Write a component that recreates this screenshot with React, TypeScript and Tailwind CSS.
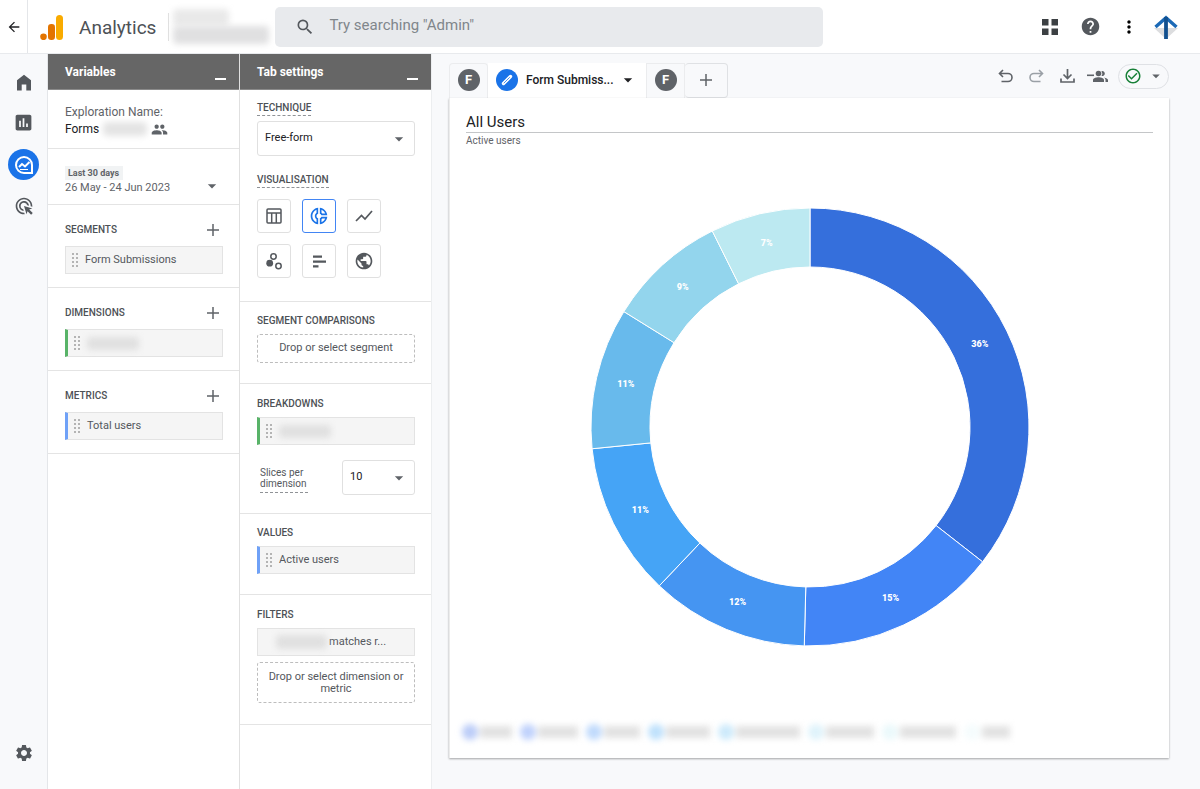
import type { ReactNode } from 'react'
import clsx from 'clsx'
import {
  MdAdsClick,
  MdArrowBack,
  MdArrowDropDown,
  MdCheckCircleOutline,
  MdGroup,
  MdHelp,
  MdInsertChart,
  MdMoreVert,
  MdOutlineDonutSmall,
  MdPublic,
  MdSearch,
  MdSettings,
} from 'react-icons/md'

const slices = [
  { label: '36%', end: 128, color: '#356fdc' },
  { label: '15%', end: 181.5, color: '#4285f6' },
  { label: '12%', end: 223.5, color: '#4595f2' },
  { label: '11%', end: 264.3, color: '#45a4f6' },
  { label: '11%', end: 301.8, color: '#68baec' },
  { label: '9%', end: 333.5, color: '#93d5ed' },
  { label: '7%', end: 360, color: '#bce9f1' },
]

// Hidden legend entries: dot colour and name width
const legend = [
  { dot: 'bg-[#bccdf8]', bar: 'w-8' },
  { dot: 'bg-[#c0d2fc]', bar: 'w-10' },
  { dot: 'bg-[#c0dafc]', bar: 'w-9' },
  { dot: 'bg-[#bfe1fc]', bar: 'w-11' },
  { dot: 'bg-[#cdeafb]', bar: 'w-16' },
  { dot: 'bg-[#dff3fb]', bar: 'w-12' },
  { dot: 'bg-[#ebf9fb]', bar: 'w-14' },
  { dot: 'bg-[#f5fcfd]', bar: 'w-7' },
]

function point(angle: number, radius: number) {
  const rad = (angle * Math.PI) / 180
  return [219 + radius * Math.sin(rad), 219 - radius * Math.cos(rad)]
}

function slicePath(start: number, end: number) {
  const [x1, y1] = point(start, 219)
  const [x2, y2] = point(end, 219)
  const [x3, y3] = point(end, 160)
  const [x4, y4] = point(start, 160)
  return `M${x1} ${y1}A219 219 0 0 1 ${x2} ${y2}L${x3} ${y3}A160 160 0 0 0 ${x4} ${y4}Z`
}

function DonutChart() {
  return (
    <svg viewBox="0 0 438 438" className="w-full max-w-[438px]" role="img" aria-label="Active users">
      {slices.map((slice, i) => {
        const start = i === 0 ? 0 : slices[i - 1].end
        const [x, y] = point((start + slice.end) / 2, 189)
        return (
          <g key={i}>
            <path d={slicePath(start, slice.end)} fill={slice.color} stroke="#fff" strokeWidth="1" />
            <text x={x} y={y + 3} textAnchor="middle" fill="#fff" className="text-[9px] font-black">
              {slice.label}
            </text>
          </g>
        )
      })}
    </svg>
  )
}

function Redacted({ className }: { className: string }) {
  return <span aria-hidden className={clsx('block rounded-sm blur-[3px]', className)} />
}

function PanelHeader({ title }: { title: string }) {
  return (
    <header className="flex h-9 items-center justify-between border-b border-[#8a8a8a] bg-[#666] pr-[13px] pl-[17px] text-white">
      <h2 className="text-xs font-bold">{title}</h2>
      <button type="button" aria-label={`Minimise ${title}`} className="flex h-4 w-[11px] items-end">
        <span className="h-0.5 w-full bg-white" />
      </button>
    </header>
  )
}

function PlusIcon() {
  return (
    <svg viewBox="0 0 14 14" className="size-[14px]" fill="none" stroke="#5f6368" strokeWidth="1.5">
      <path d="M7 1v12M1 7h12" />
    </svg>
  )
}

function DragHandle() {
  return (
    <svg viewBox="0 0 7 15" className="h-[15px] w-[7px] shrink-0" fill="#b4b4b4">
      {[0, 4, 8, 12].map((y) => (
        <g key={y}>
          <rect x="0" y={y} width="2" height="2" />
          <rect x="4" y={y} width="2" height="2" />
        </g>
      ))}
    </svg>
  )
}

function Chip({ accent, children }: { accent?: 'green' | 'blue'; children: ReactNode }) {
  return (
    <div
      className={clsx(
        'flex h-7 items-center gap-[6px] border border-[#e3e3e3] bg-[#f5f5f5] pl-[6px] text-[11px] text-[#54585d]',
        accent && 'border-l-[3px]',
        accent === 'green' && 'border-l-[#58b368]',
        accent === 'blue' && 'border-l-[#6fa1f7]',
      )}
    >
      <DragHandle />
      {children}
    </div>
  )
}

function VariableSection({ title, children }: { title: string; children: ReactNode }) {
  return (
    <section className="h-[83px] border-b border-[#e4e4e4] pt-4 pr-4 pl-[17px]">
      <div className="mb-2 flex h-[17px] items-center justify-between pr-[3px]">
        <h3 className="text-[10px] leading-[17px] font-medium text-[#4d5156]">{title}</h3>
        <button type="button" aria-label={`Add ${title.toLowerCase()}`} className="h-4">
          <PlusIcon />
        </button>
      </div>
      {children}
    </section>
  )
}

function SettingSection({ className, children }: { className: string; children: ReactNode }) {
  return (
    <section className={clsx('border-b border-[#e4e4e4] pr-4 pl-[17px]', className)}>{children}</section>
  )
}

function SettingTitle({ children }: { children: ReactNode }) {
  return <h3 className="mb-[6px] text-[10px] leading-[14px] font-medium text-[#4d5156]">{children}</h3>
}

function SelectBox({ id, value, className }: { id: string; value: string; className?: string }) {
  return (
    <div className={clsx('relative', className)}>
      <select
        id={id}
        className="block h-[35px] w-full appearance-none rounded-[3px] border border-[#e0e0e0] bg-white px-[7px] text-[11px] text-[#202124]"
      >
        <option>{value}</option>
      </select>
      <MdArrowDropDown className="pointer-events-none absolute top-2 right-[6px] size-5 text-[#5f6368]" />
    </div>
  )
}

function VisButton({ label, active, children }: { label: string; active?: boolean; children: ReactNode }) {
  return (
    <button
      type="button"
      aria-label={label}
      aria-pressed={!!active}
      className={clsx(
        'flex size-[34px] items-center justify-center rounded-[3px] border bg-white',
        active ? 'border-[#4285f4] text-[#1a73e8]' : 'border-[#e0e0e0] text-[#54585d]',
      )}
    >
      {children}
    </button>
  )
}

function TopBar() {
  return (
    <header className="flex h-[54px] shrink-0 items-center border-b border-[#e8eaed] bg-white">
      <button
        type="button"
        aria-label="Back"
        className="flex h-full w-7 items-center justify-center border-r border-[#e4e6e9] text-[#202124]"
      >
        <MdArrowBack className="size-4" />
      </button>
      <svg viewBox="0 0 24 26" className="ml-3 h-[26px] w-6">
        <rect x="16" y="1" width="7" height="25" rx="3.5" fill="#f9ab00" />
        <rect x="8" y="10" width="7" height="16" rx="3.2" fill="#e37400" />
        <circle cx="3.5" cy="22.8" r="3.3" fill="#e37400" />
      </svg>
      <h1 className="ml-[15px] pt-[3px] text-[19px] text-[#4d5156]">Analytics</h1>
      <div className="ml-3 h-7 w-px shrink-0 bg-[#e0e0e0]" />
      <div className="ml-1 w-[98px] shrink-0">
        <Redacted className="h-[17px] w-14 bg-[#e9e9e9]" />
        <Redacted className="h-[18px] w-24 bg-[#e0e0e1]" />
      </div>
      <label className="ml-1 flex h-10 max-w-[548px] flex-1 items-center gap-[14px] rounded-[5px] bg-[#e8eaed] px-5">
        <MdSearch className="size-5 shrink-0 text-[#54585d]" />
        <input
          type="text"
          aria-label="Search"
          placeholder={'Try searching "Admin"'}
          className="min-w-0 flex-1 bg-transparent pb-0.5 text-[15px] placeholder:text-[#80868b]"
        />
      </label>
      <div className="ml-auto flex items-center gap-[18px] pr-[14px] text-[#54585d]">
        <button type="button" aria-label="Apps" className="mr-1">
          <svg viewBox="0 0 16 16" className="size-4" fill="#3c4043">
            <path d="M0 0h6.500v6.500h-6.500zM9.500 0h6.500v6.500h-6.500zM0 9.500h6.500v6.500h-6.500zM9.500 9.500h6.500v6.500h-6.500z" />
          </svg>
        </button>
        <button type="button" aria-label="Help">
          <MdHelp className="size-[21px]" />
        </button>
        <button type="button" aria-label="More" className="text-black">
          <MdMoreVert className="size-5" />
        </button>
      </div>
      <button type="button" aria-label="Account" className="mr-[21px]">
        <svg viewBox="0 0 26 26" className="size-[26px]" fill="none">
          <path d="M1 14h24L13 25z" fill="#dcdddf" />
          <path d="M2.500 13 13 3.800 23.500 13" stroke="#1b69b6" strokeWidth="3.400" />
          <path d="M13 3v22" stroke="#12508f" strokeWidth="3.800" />
        </svg>
      </button>
    </header>
  )
}

function SideNav() {
  return (
    <nav className="flex w-12 shrink-0 flex-col items-center border-r border-[#e4e6e9] pt-5 pb-[26px] text-[#54585d]">
      <a href="#home" aria-label="Home">
        <svg viewBox="0 0 16 17" className="h-[17px] w-4" fill="currentColor">
          <path d="M8 .8 15 6.300V16.500H10.300V10.500H5.700V16.500H1V6.300z" />
        </svg>
      </a>
      <a href="#reports" aria-label="Reports" className="mt-[21px]">
        <MdInsertChart className="size-[21px]" />
      </a>
      <a
        href="#explore"
        aria-label="Explore"
        className="mt-4 flex size-[31px] items-center justify-center rounded-full bg-[#1a73e8]"
      >
        <svg viewBox="0 0 20 20" className="size-5" fill="none" stroke="#fff" strokeWidth="2">
          <path d="M10 18a8 8 0 1 1 8-8v8z" />
          <path d="m5 12 3-3 3 2.500 4.500-4.500" />
          <path d="M6 14.500h8" strokeWidth="1" />
        </svg>
      </a>
      <a href="#advertising" aria-label="Advertising" className="mt-4">
        <MdAdsClick className="size-5" />
      </a>
      <a href="#admin" aria-label="Admin" className="mt-auto">
        <MdSettings className="size-5" />
      </a>
    </nav>
  )
}

function VariablesPanel() {
  return (
    <aside className="w-48 shrink-0 border-r border-[#e0e0e0] bg-white">
      <PanelHeader title="Variables" />
      <section className="h-[59px] border-b border-[#e4e4e4] pt-[13px] pl-[17px] text-xs text-[#5f6368]">
        <p className="leading-[18px]">Exploration Name:</p>
        <div className="flex h-4 items-center text-[#202124]">
          Forms
          <Redacted className="ml-1 h-[14px] w-11 bg-[#e4e4e4]" />
          <MdGroup className="ml-1 size-[17px] text-[#5f6368]" />
        </div>
      </section>
      <section className="flex h-14 items-end justify-between border-b border-[#e4e4e4] pr-[17px] pb-2 pl-[17px] text-[#5f6368]">
        <div>
          <span className="block w-[58px] bg-[#f1f3f4] pl-[3px] text-[9px] leading-[14px] font-bold">
            Last 30 days
          </span>
          <p className="text-[11px] leading-4">26 May - 24 Jun 2023</p>
        </div>
        <button type="button" aria-label="Change date range">
          <MdArrowDropDown className="size-5" />
        </button>
      </section>
      <VariableSection title="SEGMENTS">
        <Chip>Form Submissions</Chip>
      </VariableSection>
      <VariableSection title="DIMENSIONS">
        <Chip accent="green">
          <Redacted className="h-[13px] w-[52px] bg-[#e0e0e0]" />
        </Chip>
      </VariableSection>
      <VariableSection title="METRICS">
        <Chip accent="blue">Total users</Chip>
      </VariableSection>
    </aside>
  )
}

function SettingsPanel() {
  return (
    <aside className="w-[191px] shrink-0 bg-white">
      <PanelHeader title="Tab settings" />
      <SettingSection className="h-[212px] pt-[11px]">
        <label
          htmlFor="technique"
          className="mb-[5px] block w-fit border-b border-dashed border-[#8f9296] text-[10px] leading-[14px] font-medium text-[#4d5156]"
        >
          TECHNIQUE
        </label>
        <SelectBox id="technique" value="Free-form" />
        <h3 className="mt-[17px] mb-[11px] w-fit border-b border-dashed border-[#8f9296] text-[10px] leading-[14px] font-medium text-[#4d5156]">
          VISUALISATION
        </h3>
        <div className="grid w-fit grid-cols-3 gap-[11px]">
          <VisButton label="Table">
            <svg viewBox="0 0 16 16" className="size-4" fill="none" stroke="currentColor" strokeWidth="1.5">
              <rect x="1" y="1" width="14" height="14" rx="1" />
              <path d="M1 5h14M5.700 5v10M10.300 5v10" />
            </svg>
          </VisButton>
          <VisButton label="Donut chart" active>
            <MdOutlineDonutSmall className="size-5" />
          </VisButton>
          <VisButton label="Line chart">
            <svg viewBox="0 0 18 12" className="h-3 w-[18px]" fill="none" stroke="currentColor" strokeWidth="1.700">
              <path d="m1 11 5.500-5.500 3.500 3.500 7-8" />
            </svg>
          </VisButton>
          <VisButton label="Scatter plot">
            <svg viewBox="0 0 16 17" className="h-[17px] w-4" fill="none" stroke="currentColor" strokeWidth="1.500">
              <circle cx="7.500" cy="3.500" r="2.700" />
              <circle cx="12.500" cy="13" r="2.700" />
              <circle cx="3.700" cy="10.200" r="3.400" fill="currentColor" stroke="none" />
            </svg>
          </VisButton>
          <VisButton label="Bar chart">
            <svg viewBox="0 0 13 13" className="size-[13px]" fill="currentColor">
              <path d="M0 .5h9v2.300h-9zM0 5.400h13v2.300h-13zM0 10.200h5.500v2.300h-5.500z" />
            </svg>
          </VisButton>
          <VisButton label="Geo map">
            <MdPublic className="size-5" />
          </VisButton>
        </div>
      </SettingSection>
      <SettingSection className="h-[82px] pt-3">
        <SettingTitle>SEGMENT COMPARISONS</SettingTitle>
        <button
          type="button"
          className="h-[29px] w-full rounded-[3px] border border-dashed border-[#bdbdbd] text-[11px] text-[#54585d]"
        >
          Drop or select segment
        </button>
      </SettingSection>
      <SettingSection className="h-[130px] pt-[13px]">
        <SettingTitle>BREAKDOWNS</SettingTitle>
        <Chip accent="green">
          <Redacted className="h-[13px] w-[52px] bg-[#e0e0e0]" />
        </Chip>
        <div className="mt-[15px] flex items-center justify-between pl-[3px]">
          <label
            htmlFor="slices"
            className="mt-1 w-12 border-b border-dashed border-[#8f9296] pb-[3px] text-[10px] leading-[11px] text-[#54585d]"
          >
            Slices per dimension
          </label>
          <SelectBox id="slices" value="10" className="w-[73px]" />
        </div>
      </SettingSection>
      <SettingSection className="h-[81px] pt-3">
        <SettingTitle>VALUES</SettingTitle>
        <Chip accent="blue">Active users</Chip>
      </SettingSection>
      <SettingSection className="h-[130px] pt-[13px]">
        <SettingTitle>FILTERS</SettingTitle>
        <div className="mb-[6px] flex h-7 items-center border border-[#e3e3e3] bg-[#f5f5f5] pl-[18px] text-[11px] text-[#54585d]">
          <Redacted className="mr-0.5 h-[14px] w-[51px] bg-[#e0e0e0]" />
          matches r...
        </div>
        <button
          type="button"
          className="h-[41px] w-full rounded-[3px] border border-dashed border-[#bdbdbd] text-[11px] leading-3 text-[#54585d]"
        >
          Drop or select dimension or metric
        </button>
      </SettingSection>
    </aside>
  )
}

function LetterBadge() {
  return (
    <span className="flex size-[22px] items-center justify-center rounded-full bg-[#5f6368] text-[13px] font-bold text-white">
      F
    </span>
  )
}

function TabBar() {
  return (
    <div className="flex h-[35px] items-stretch">
      <button
        type="button"
        className="flex w-[39px] items-center justify-center rounded-t-sm border border-b-0 border-[#ebecee] pb-0.5"
      >
        <LetterBadge />
      </button>
      <button
        type="button"
        className="flex w-[158px] items-center bg-white pb-0.5 pl-2 text-xs font-medium text-[#202124]"
      >
        <span className="mr-2 flex size-[22px] items-center justify-center rounded-full bg-[#1a73e8]">
          <svg viewBox="0 0 14 14" className="size-[14px]" fill="none" stroke="#fff" strokeLinecap="round">
            <path d="m3.500 10.500 7-7" strokeWidth="3.400" />
            <path d="m4 10 5.500-5.500" stroke="#1a73e8" strokeWidth=".8" />
          </svg>
        </span>
        Form Submiss...
        <MdArrowDropDown className="ml-1 size-5" />
      </button>
      <button
        type="button"
        className="flex w-[39px] items-center justify-center border border-b-0 border-[#ebecee] pb-0.5"
      >
        <LetterBadge />
      </button>
      <button
        type="button"
        aria-label="Add tab"
        className="flex w-[43px] items-center justify-center rounded-sm border border-l-0 border-[#dfe1e4] pb-0.5"
      >
        <PlusIcon />
      </button>
      <div className="ml-auto flex items-center gap-4 pb-[9px] text-[#5f6368]">
        <button type="button" aria-label="Undo">
          <svg viewBox="0 0 15 14" className="h-[14px] w-[15px]" fill="none" stroke="currentColor" strokeWidth="1.600">
            <path d="M5 1 1.500 4.500 5 8M2 4.500h8a4 4 0 0 1 0 8H3.500" />
          </svg>
        </button>
        <button type="button" aria-label="Redo" className="text-[#9aa0a6]">
          <svg viewBox="0 0 15 14" className="h-[14px] w-[15px]" fill="none" stroke="currentColor" strokeWidth="1.600">
            <path d="m10 1 3.500 3.500L10 8M13 4.500H5a4 4 0 0 0 0 8h6.500" />
          </svg>
        </button>
        <button type="button" aria-label="Export data">
          <svg viewBox="0 0 15 14" className="h-[14px] w-[15px]" fill="none" stroke="currentColor" strokeWidth="1.700">
            <path d="M7.500 0v9M3.500 5.500l4 4 4-4M1 9.500V13h13V9.500" />
          </svg>
        </button>
        <button type="button" aria-label="Share exploration" className="-ml-1">
          <svg viewBox="0 0 21 13" className="h-[13px] w-[21px]" fill="currentColor">
            <path d="M0 4.500h7v1.600H0z" />
            <circle cx="11.500" cy="3.500" r="2.800" />
            <path d="M6 12v-2c0-2 3.500-2.800 5.500-2.800S17 8 17 10v2zM14.500 1q1.500 2.500 0 5a2.600 2.600 0 1 0 0-5zM17 7.400c2 .5 4 1.200 4 2.700V12h-2.500v-2c0-1.100-.6-1.900-1.500-2.600z" />
          </svg>
        </button>
        <button
          type="button"
          aria-label="Data quality"
          className="-ml-[6px] flex h-[25px] w-[51px] items-center gap-[5px] rounded-full border border-[#dfe1e5] pl-[5px]"
        >
          <MdCheckCircleOutline className="size-[18px] text-[#188038]" />
          <MdArrowDropDown className="size-[18px]" />
        </button>
      </div>
    </div>
  )
}

function Report() {
  return (
    <main className="flex min-w-0 flex-1 flex-col border-l border-[#eceef0] pt-[9px] pr-[31px] pb-[31px] pl-[17px]">
      <TabBar />
      <div className="flex flex-1 flex-col border-l border-[#ececec] bg-white px-4 pt-3 shadow-[0_1px_2px_rgba(0,0,0,0.35)]">
        <h2 className="border-b border-[#c4c6c8] pt-0.5 text-[15px] leading-5 text-[#202124]">All Users</h2>
        <p className="text-[10px] leading-4 text-[#5f6368]">Active users</p>
        <div className="mt-[59px] flex justify-center">
          <DonutChart />
        </div>
        <ul aria-hidden className="mt-auto -ml-1 flex gap-2 pb-[18px]">
          {legend.map((item, i) => (
            <li key={i} className="flex items-center gap-0.5 blur-[3px]">
              <span className={clsx('size-4 rounded-full', item.dot)} />
              <span className={clsx('h-3 bg-[#e2e2e2]', item.bar)} />
            </li>
          ))}
        </ul>
      </div>
    </main>
  )
}

export default function App() {
  return (
    <div className="flex min-h-screen flex-col bg-[#f8f9fb] font-[Roboto,sans-serif]">
      <TopBar />
      <div className="flex flex-1">
        <SideNav />
        <VariablesPanel />
        <SettingsPanel />
        <Report />
      </div>
    </div>
  )
}
